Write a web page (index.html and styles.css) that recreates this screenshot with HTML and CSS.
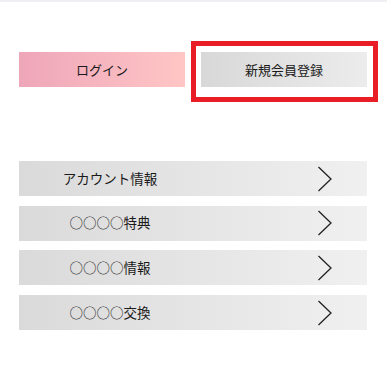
FILE: index.html
```html
<!DOCTYPE html>
<html lang="ja">
<head>
<meta charset="utf-8">
<link rel="stylesheet" href="styles.css">
</head>
<body>
<div class="topline"></div>
<div class="page">
  <div class="auth">
    <a class="btn btn-login">ログイン</a>
    <a class="btn btn-register">新規会員登録</a>
  </div>
  <ul class="menu">
    <li class="row"><span class="label">アカウント情報</span><svg class="chev" width="16" height="26" viewBox="0 0 16 26"><path d="M1.5 1 L14 13 L1.5 25" fill="none" stroke="#222" stroke-width="1.3"/></svg></li>
    <li class="row"><span class="label">○○○○特典</span><svg class="chev" width="16" height="26" viewBox="0 0 16 26"><path d="M1.5 1 L14 13 L1.5 25" fill="none" stroke="#222" stroke-width="1.3"/></svg></li>
    <li class="row"><span class="label">○○○○情報</span><svg class="chev" width="16" height="26" viewBox="0 0 16 26"><path d="M1.5 1 L14 13 L1.5 25" fill="none" stroke="#222" stroke-width="1.3"/></svg></li>
    <li class="row"><span class="label">○○○○交換</span><svg class="chev" width="16" height="26" viewBox="0 0 16 26"><path d="M1.5 1 L14 13 L1.5 25" fill="none" stroke="#222" stroke-width="1.3"/></svg></li>
  </ul>
</div>
</body>
</html>
```
FILE: styles.css
```css
html, body {
  margin: 0;
  padding: 0;
  background: #fff;
  font-family: "Noto Sans CJK JP", "Noto Sans", sans-serif;
  color: #1a1a1a;
}
.topline {
  height: 2px;
  background: #eeeef3;
}
.page {
  padding: 50px 20px 0 19px;
}
.auth {
  display: flex;
  gap: 16px;
}
.btn {
  display: flex;
  align-items: center;
  justify-content: center;
  width: 166px;
  height: 35px;
  font-size: 13px;
  color: #1a1a1a;
  text-decoration: none;
}
.btn-login {
  background: linear-gradient(to right, #eea6b9, #ffc6c5);
}
.btn-register {
  position: relative;
  background: linear-gradient(to right, #d8d8d8, #ececec);
}
.btn-register::after {
  content: "";
  position: absolute;
  left: -10px;
  right: -11px;
  top: -11px;
  bottom: -15px;
  border: 5px solid #e81d25;
}
.menu {
  list-style: none;
  margin: 74px 0 0;
  padding: 0;
  display: flex;
  flex-direction: column;
  gap: 9.7px;
}
.row {
  display: flex;
  align-items: center;
  height: 35px;
  background: linear-gradient(to right, #dadada, #f0f0f0);
}
.label {
  width: 182px;
  text-align: center;
  font-size: 13.5px;
  line-height: 1;
}
.chev {
  margin-left: 116px;
  display: block;
}
```
